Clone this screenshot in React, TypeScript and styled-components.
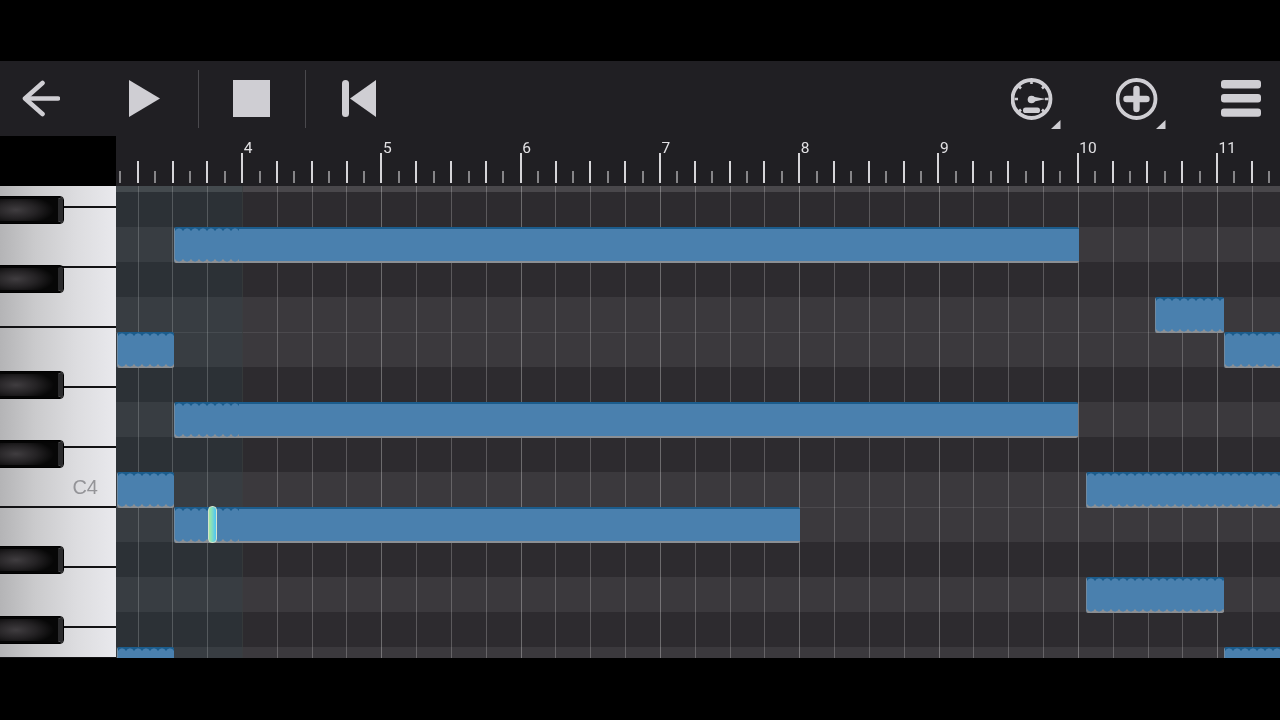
import React from "react";
import styled, { createGlobalStyle } from "styled-components";

const Global = createGlobalStyle`
  html, body { margin: 0; padding: 0; background: #000; overflow: hidden; }
  #root { width: 1280px; height: 720px; }
`;

const Page = styled.div`
  width: 1280px;
  height: 720px;
  background: #000;
  padding: 61px 0 62px;
  box-sizing: border-box;
  display: flex;
  flex-direction: column;
  overflow: hidden;
  font-family: Roboto, "Liberation Sans", sans-serif;
  filter: blur(0.6px);
`;

const Toolbar = styled.div`
  flex: none;
  height: 75px;
  background: #201f23;
  display: flex;
  align-items: center;
  justify-content: space-between;
  padding: 0 19px 0 22px;
`;

const ToolGroup = styled.div<{ $gap?: number }>`
  display: flex;
  align-items: center;
  gap: ${(p) => p.$gap ?? 0}px;
`;

const Tool = styled.div<{ $ml?: number }>`
  display: flex;
  margin-left: ${(p) => p.$ml ?? 0}px;
  color: #cfced3;
`;

const Divider = styled.div<{ $ml: number }>`
  width: 1px;
  height: 58px;
  margin-left: ${(p) => p.$ml}px;
  background: #4a494d;
`;

const RulerRow = styled.div`
  flex: none;
  height: 50px;
  display: flex;
`;

const Corner = styled.div`
  flex: none;
  width: 116px;
  background: #000;
`;

const Ruler = styled.div`
  flex: 1;
  background: #201f23;
  display: flex;
  align-items: flex-end;
  padding: 0 0 3px 3.4px;
  overflow: hidden;
`;

const TickCell = styled.div`
  flex: none;
  width: 17.42px;
  display: flex;
  align-items: flex-end;
  position: relative;
`;

const TickMark = styled.div<{ $kind: "bar" | "beat" | "half" }>`
  width: 2px;
  height: ${(p) => (p.$kind === "bar" ? 30 : p.$kind === "beat" ? 22 : 12)}px;
  background: ${(p) => (p.$kind === "half" ? "#868588" : "#d6d5d8")};
`;

const BarLabel = styled.span`
  position: absolute;
  left: 2.5px;
  bottom: 27px;
  font-size: 15.5px;
  line-height: 15px;
  color: #e2e1e4;
`;

const Main = styled.div`
  flex: none;
  height: 472px;
  display: flex;
`;

const Keyboard = styled.div`
  flex: none;
  width: 116px;
  display: flex;
  flex-direction: column;
  position: relative;
  overflow: hidden;
`;

const WhiteKey = styled.div<{ $h: number }>`
  flex: none;
  height: ${(p) => p.$h}px;
  box-sizing: border-box;
  border-bottom: 2px solid #121214;
  background: linear-gradient(90deg, #b4b4b6 0%, #cacacc 30%, #dcdcdf 65%, #e9e9ed 100%);
  display: flex;
  align-items: flex-end;
  justify-content: flex-end;
  padding: 0 18px 7px 0;
  &:last-of-type { border-bottom: none; }
`;

const KeyName = styled.span`
  font-family: "Liberation Sans", Arial, sans-serif;
  font-size: 20px;
  line-height: 24px;
  color: #949498;
`;

const BlackKey = styled.div<{ $top: number }>`
  position: absolute;
  left: 0;
  top: ${(p) => p.$top}px;
  width: 63px;
  height: 26px;
  box-sizing: border-box;
  border: 2px solid #050505;
  border-left: none;
  border-right: 5px solid #2a2a2c;
  outline: 1px solid #000;
  border-radius: 0 3px 3px 0;
  background: radial-gradient(ellipse 38px 15px at 16px 50%, #403d40 0%, #242224 55%, #070707 100%);
`;

const Roll = styled.div`
  flex: 1;
  position: relative;
  overflow: hidden;
  display: flex;
  flex-direction: column;
`;

const TopStrip = styled.div`
  flex: none;
  height: 6px;
  background: #49474b;
`;

const Lane = styled.div<{ $light: boolean; $sep: boolean; $h: number }>`
  flex: none;
  box-sizing: border-box;
  height: ${(p) => p.$h}px;
  background: ${(p) => (p.$light ? "#3b393d" : "#2d2b2f")};
  border-top: ${(p) => (p.$sep ? "1px solid #4b494d" : "none")};
`;

const GridLines = styled.div`
  position: absolute;
  inset: 0;
  display: flex;
  padding-left: 21.5px;
`;

const GridCell = styled.div<{ $bar: boolean }>`
  flex: none;
  width: 34.83px;
  box-sizing: border-box;
  border-left: 1px solid ${(p) => (p.$bar ? "rgba(255,255,255,0.3)" : "rgba(255,255,255,0.22)")};
`;

const Tint = styled.div`
  position: absolute;
  left: 0;
  top: 0;
  bottom: 0;
  width: 126px;
  background: rgba(45, 90, 100, 0.14);
  border-right: 1px solid rgba(0, 0, 0, 0.45);
`;

const Note = styled.div<{ $left: number; $width: number; $row: number; $edge: number }>`
  position: absolute;
  left: ${(p) => p.$left}px;
  width: ${(p) => p.$width}px;
  top: ${(p) => 6 + p.$row * 35}px;
  height: 35.5px;
  box-sizing: border-box;
  background: #4a80ae;
  border-radius: 2px;
  border-top: 2px solid #1b5c8c;
  border-bottom: 2px solid #8b8f94;
  border-left: 1px solid #6f8aa2;
  &::before, &::after {
    content: "";
    position: absolute;
    left: 0;
    width: min(${(p) => p.$edge}px, 100%);
    height: 3px;
    background-size: 8px 3px;
  }
  &::before {
    top: -1px;
    background-image: radial-gradient(circle at 4px 4.5px, #4a80ae 3.7px, #1b5c8c 4.4px);
  }
  &::after {
    bottom: -1px;
    background-image: radial-gradient(circle at 4px -1.5px, #4a80ae 3.7px, #8b8f94 4.4px);
  }
`;

const Playhead = styled.div`
  position: absolute;
  left: 92px;
  top: 320px;
  width: 9px;
  height: 37px;
  box-sizing: border-box;
  border-radius: 4px;
  border: 1px solid #d2e4cc;
  background: linear-gradient(90deg, #a6ea9f 0%, #7fdcc4 45%, #4cc4f6 100%);
`;

const CORNER = "#cfced3";

const BackIcon = () => (
  <svg width="38" height="37" viewBox="0 0 38 37" fill="none" stroke={CORNER} strokeWidth="4.6" strokeLinecap="round" strokeLinejoin="round">
    <path d="M36 18.5H4" />
    <path d="M20.5 3L3 18.5L20.5 34" />
  </svg>
);

const PlayIcon = () => (
  <svg width="31" height="37" viewBox="0 0 31 37" fill={CORNER}>
    <path d="M0 0L31 18.5L0 37Z" />
  </svg>
);

const StopIcon = () => (
  <svg width="37" height="37" viewBox="0 0 37 37" fill={CORNER}>
    <rect width="37" height="37" />
  </svg>
);

const SkipIcon = () => (
  <svg width="34" height="37" viewBox="0 0 34 37" fill={CORNER}>
    <rect width="7" height="37" rx="3.5" />
    <path d="M8 18.5L34 0V37Z" />
  </svg>
);

const SpeedIcon = () => (
  <svg width="50" height="60" viewBox="0 0 50 60" fill="none" stroke={CORNER}>
    <circle cx="20.5" cy="30" r="19" strokeWidth="3.8" />
    <path d="M20.5 12v3M8 17.5l2 2M33 17.5l-2 2M3.5 30h3.5M34 30h3.5M8 42.5l2-2M33 42.5l-2-2" strokeWidth="2.6" />
    <circle cx="20.5" cy="30.5" r="3.8" fill={CORNER} stroke="none" />
    <path d="M21 27.5L35 30L21 33Z" fill={CORNER} stroke="none" />
    <rect x="12" y="38.5" width="17" height="5.5" rx="2.6" fill={CORNER} stroke="none" />
    <path d="M49.5 51V60H40Z" fill={CORNER} stroke="none" />
  </svg>
);

const PlusIcon = () => (
  <svg width="50" height="60" viewBox="0 0 50 60" fill="none" stroke={CORNER}>
    <circle cx="20.5" cy="30" r="19" strokeWidth="3.8" />
    <path d="M20.5 20V40M10.5 30H30.5" strokeWidth="6.4" strokeLinecap="round" />
    <path d="M49.5 51V60H40Z" fill={CORNER} stroke="none" />
  </svg>
);

const MenuIcon = () => (
  <svg width="40" height="37" viewBox="0 0 40 37" fill={CORNER}>
    <rect y="0" width="40" height="8.4" rx="3" />
    <rect y="14" width="40" height="8.4" rx="3" />
    <rect y="28.4" width="40" height="8.4" rx="3" />
  </svg>
);

const ticks = Array.from({ length: 68 }, (_, i) => {
  const fromBar = i - 7;
  const isBar = ((fromBar % 8) + 8) % 8 === 0;
  const kind: "bar" | "beat" | "half" = isBar ? "bar" : i % 2 === 1 ? "beat" : "half";
  return { kind, label: isBar ? 4 + fromBar / 8 : null };
});

const gridCells = Array.from({ length: 34 }, (_, i) => ((i - 3) % 4 + 4) % 4 === 0);

const lanes = [false, true, false, true, true, false, true, false, true, true, false, true, false, true];

const whiteKeys: { h: number; name?: string }[] = [
  { h: 22 },
  { h: 60 },
  { h: 60 },
  { h: 60 },
  { h: 60 },
  { h: 60, name: "C4" },
  { h: 60 },
  { h: 60 },
  { h: 31 },
];

const blackKeys = [11, 80, 186, 255, 361, 431];

const notes = [
  { left: 58, width: 905, row: 1, edge: 64 },
  { left: 1039, width: 69, row: 3, edge: 69 },
  { left: 1, width: 57, row: 4, edge: 57 },
  { left: 1108, width: 60, row: 4, edge: 60 },
  { left: 58, width: 904, row: 6, edge: 64 },
  { left: 1, width: 57, row: 8, edge: 57 },
  { left: 970, width: 200, row: 8, edge: 200 },
  { left: 58, width: 626, row: 9, edge: 64 },
  { left: 970, width: 138, row: 11, edge: 138 },
  { left: 1, width: 57, row: 13, edge: 57 },
  { left: 1108, width: 60, row: 13, edge: 60 },
];

export default function App() {
  return (
    <Page>
      <Global />
      <Toolbar>
        <ToolGroup>
          <Tool><BackIcon /></Tool>
          <Tool $ml={69}><PlayIcon /></Tool>
          <Divider $ml={38} />
          <Tool $ml={34}><StopIcon /></Tool>
          <Divider $ml={35} />
          <Tool $ml={36}><SkipIcon /></Tool>
        </ToolGroup>
        <ToolGroup $gap={55}>
          <Tool><SpeedIcon /></Tool>
          <Tool><PlusIcon /></Tool>
          <Tool><MenuIcon /></Tool>
        </ToolGroup>
      </Toolbar>
      <RulerRow>
        <Corner />
        <Ruler>
          {ticks.map((t, i) => (
            <TickCell key={i}>
              <TickMark $kind={t.kind} />
              {t.label !== null && <BarLabel>{t.label}</BarLabel>}
            </TickCell>
          ))}
        </Ruler>
      </RulerRow>
      <Main>
        <Keyboard>
          {whiteKeys.map((k, i) => (
            <WhiteKey key={i} $h={k.h}>
              {k.name && <KeyName>{k.name}</KeyName>}
            </WhiteKey>
          ))}
          {blackKeys.map((top) => (
            <BlackKey key={top} $top={top} />
          ))}
        </Keyboard>
        <Roll>
          <TopStrip />
          {lanes.map((light, i) => (
            <Lane
              key={i}
              $light={light}
              $sep={light && i > 0 && lanes[i - 1]}
              $h={i === lanes.length - 1 ? 11 : 35}
            />
          ))}
          <GridLines>
            {gridCells.map((bar, i) => (
              <GridCell key={i} $bar={bar} />
            ))}
          </GridLines>
          <Tint />
          {notes.map((n, i) => (
            <Note key={i} $left={n.left} $width={n.width} $row={n.row} $edge={n.edge} />
          ))}
          <Playhead />
        </Roll>
      </Main>
    </Page>
  );
}
